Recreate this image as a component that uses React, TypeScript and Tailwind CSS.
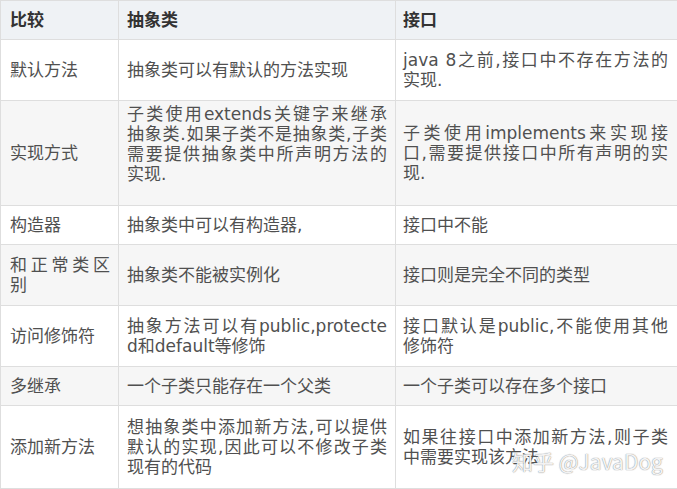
import React from 'react';

type Row = { cells: string[][]; striped: boolean; shiftUp?: boolean };

const rows: Row[] = [
  { cells: [['默认方法'], ['抽象类可以有默认的方法实现'], ['java 8之前,接口中不存在方法的', '实现.']], striped: false },
  {
    cells: [
      ['实现方式'],
      ['子类使用extends关键字来继承', '抽象类.如果子类不是抽象类,子类', '需要提供抽象类中所声明方法的', '实现.'],
      ['子类使用implements来实现接', '口,需要提供接口中所有声明的实', '现.'],
    ],
    striped: true,
    shiftUp: true,
  },
  { cells: [['构造器'], ['抽象类中可以有构造器,'], ['接口中不能']], striped: false },
  { cells: [['和正常类区', '别'], ['抽象类不能被实例化'], ['接口则是完全不同的类型']], striped: true },
  {
    cells: [['访问修饰符'], ['抽象方法可以有public,protecte', 'd和default等修饰'], ['接口默认是public,不能使用其他', '修饰符']],
    striped: false,
  },
  { cells: [['多继承'], ['一个子类只能存在一个父类'], ['一个子类可以存在多个接口']], striped: true },
  {
    cells: [
      ['添加新方法'],
      ['想抽象类中添加新方法,可以提供', '默认的实现,因此可以不修改子类', '现有的代码'],
      ['如果往接口中添加新方法,则子类', '中需要实现该方法'],
    ],
    striped: false,
  },
];

const padByCol = ['pl-[9px] pr-2', 'pl-2 pr-2', 'pl-[7px] pr-[9px]'];

// every line but the last is spread to the full width, like text-align: justify
const Lines = ({ lines }: { lines: string[] }) => (
  <div className="w-full">
    {lines.map((line, i) => (
      <div
        key={i}
        className={i < lines.length - 1 ? 'text-justify [text-align-last:justify]' : 'text-left'}
      >
        {line}
      </div>
    ))}
  </div>
);

export default function App() {
  return (
    <div className="relative w-[677px] h-[489px] overflow-hidden bg-white">
      <div
        className="grid grid-cols-[118px_277px_1fr] grid-rows-[39px_61px_105px_39px_61px_61px_39px_83px] border-t border-l border-[#dedede] text-[17px] leading-5 text-[#505050]"
        style={{ fontFamily: '"DejaVu Sans", "Noto Sans CJK SC", sans-serif' }}
      >
        {['比较', '抽象类', '接口'].map((h, c) => (
          <div
            key={h}
            className={`flex items-center bg-[#eff2f5] border-b border-[#dedede] font-bold text-[#333] ${c < 2 ? 'border-r' : ''} ${padByCol[c]}`}
          >
            {h}
          </div>
        ))}
        {rows.map((row, r) =>
          row.cells.map((lines, c) => (
            <div
              key={`${r}-${c}`}
              className={`flex items-center border-b border-[#dedede] ${c < 2 ? 'border-r' : ''} ${
                row.striped ? 'bg-[#f6f6f6]' : 'bg-white'
              } ${padByCol[c]} ${row.shiftUp && c === 1 ? 'pb-[18px]' : ''}`}
            >
              <Lines lines={lines} />
            </div>
          ))
        )}
      </div>

      {/* zhihu watermark */}
      <div
        className="absolute left-[512px] top-[449px] text-[21px] leading-6 text-white/90 whitespace-nowrap"
        style={{
          fontFamily: '"Noto Sans CJK SC", "Liberation Sans", sans-serif',
          textShadow: '0 0 1px rgba(100,100,100,0.6), 0 0 1px rgba(100,100,100,0.6)',
        }}
      >
        知乎 @JavaDog
      </div>
    </div>
  );
}
